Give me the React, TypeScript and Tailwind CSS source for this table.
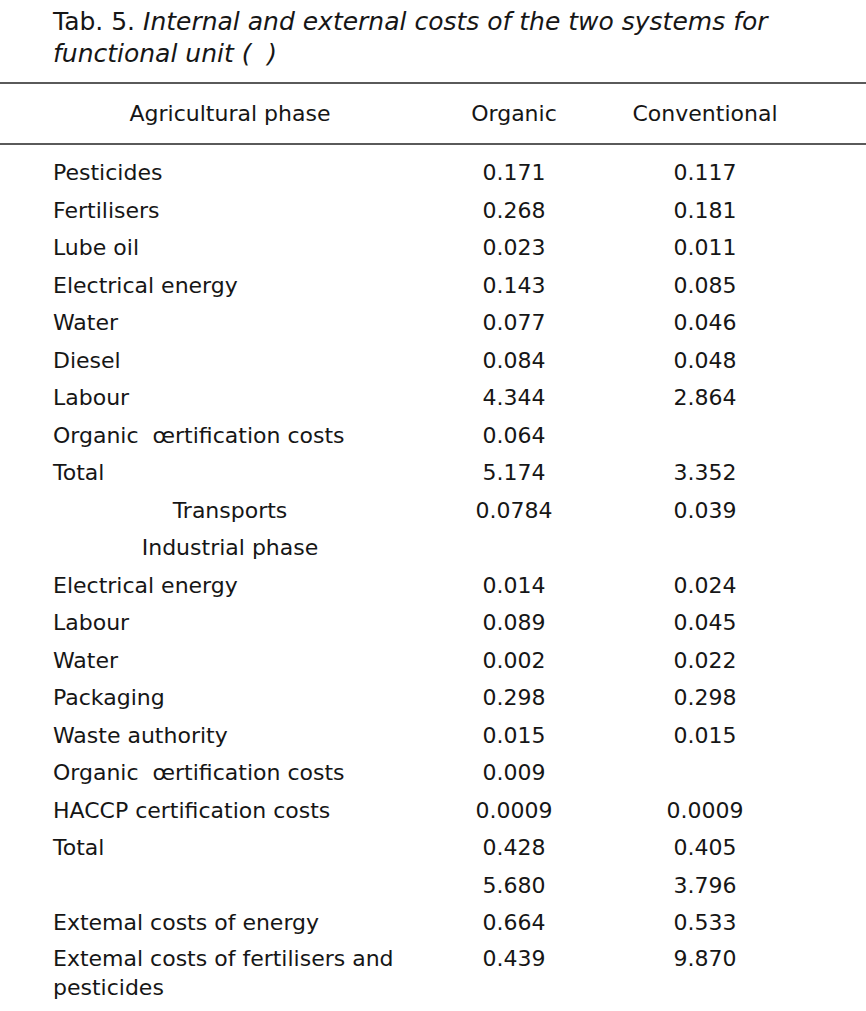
import React from 'react';

type Row = {
  label: string;
  organic?: string;
  conventional?: string;
  centered?: boolean;
};

const ROWS: Row[] = [
  { label: 'Pesticides', organic: '0.171', conventional: '0.117' },
  { label: 'Fertilisers', organic: '0.268', conventional: '0.181' },
  { label: 'Lube oil', organic: '0.023', conventional: '0.011' },
  { label: 'Electrical energy', organic: '0.143', conventional: '0.085' },
  { label: 'Water', organic: '0.077', conventional: '0.046' },
  { label: 'Diesel', organic: '0.084', conventional: '0.048' },
  { label: 'Labour', organic: '4.344', conventional: '2.864' },
  { label: 'Organic  œrtification costs', organic: '0.064' },
  { label: 'Total', organic: '5.174', conventional: '3.352' },
  { label: 'Transports', organic: '0.0784', conventional: '0.039', centered: true },
  { label: 'Industrial phase', centered: true },
  { label: 'Electrical energy', organic: '0.014', conventional: '0.024' },
  { label: 'Labour', organic: '0.089', conventional: '0.045' },
  { label: 'Water', organic: '0.002', conventional: '0.022' },
  { label: 'Packaging', organic: '0.298', conventional: '0.298' },
  { label: 'Waste authority', organic: '0.015', conventional: '0.015' },
  { label: 'Organic  œrtification costs', organic: '0.009' },
  { label: 'HACCP certification costs', organic: '0.0009', conventional: '0.0009' },
  { label: 'Total', organic: '0.428', conventional: '0.405' },
  { label: '', organic: '5.680', conventional: '3.796' },
  { label: 'Extemal costs of energy', organic: '0.664', conventional: '0.533' },
];

const font = { fontFamily: '"DejaVu Sans", "Liberation Sans", sans-serif' };

export default function App() {
  return (
    <div className="w-[866px] min-h-[1011px] bg-white text-[#161616]" style={font}>
      {/* caption, two lines */}
      <div className="pl-[53px] pt-[6px] text-[25px] leading-[32px] whitespace-nowrap">
        <div>
          <span>Tab. 5. </span>
          <span className="italic">Internal and external costs of the two systems for</span>
        </div>
        <div className="italic whitespace-pre">functional unit (  )</div>
      </div>

      <div className="mt-[12px] border-t-[2px] border-[#5a5a5a]" />

      {/* header */}
      <div className="grid grid-cols-[365px_192px_190px] pl-[53px] pt-[17px] pb-[16px] text-[22px] leading-[26px]">
        <div className="text-center pr-[11px]">Agricultural phase</div>
        <div className="text-center">Organic</div>
        <div className="text-center">Conventional</div>
      </div>

      <div className="border-t-[2px] border-[#5a5a5a]" />

      {/* body */}
      <div className="pt-[9px] pl-[53px] text-[22px]">
        {ROWS.map((r, i) => (
          <div key={i} className="grid grid-cols-[365px_192px_190px] h-[37.5px] leading-[37.5px]">
            <div className={r.centered ? 'text-center pr-[11px] whitespace-pre' : 'whitespace-pre'}>{r.label}</div>
            <div className="text-center">{r.organic}</div>
            <div className="text-center">{r.conventional}</div>
          </div>
        ))}
        <div className="grid grid-cols-[365px_192px_190px] leading-[29px] pt-[2px]">
          <div className="pr-[20px]">Extemal costs of fertilisers and pesticides</div>
          <div className="text-center">0.439</div>
          <div className="text-center">9.870</div>
        </div>
      </div>
    </div>
  );
}
